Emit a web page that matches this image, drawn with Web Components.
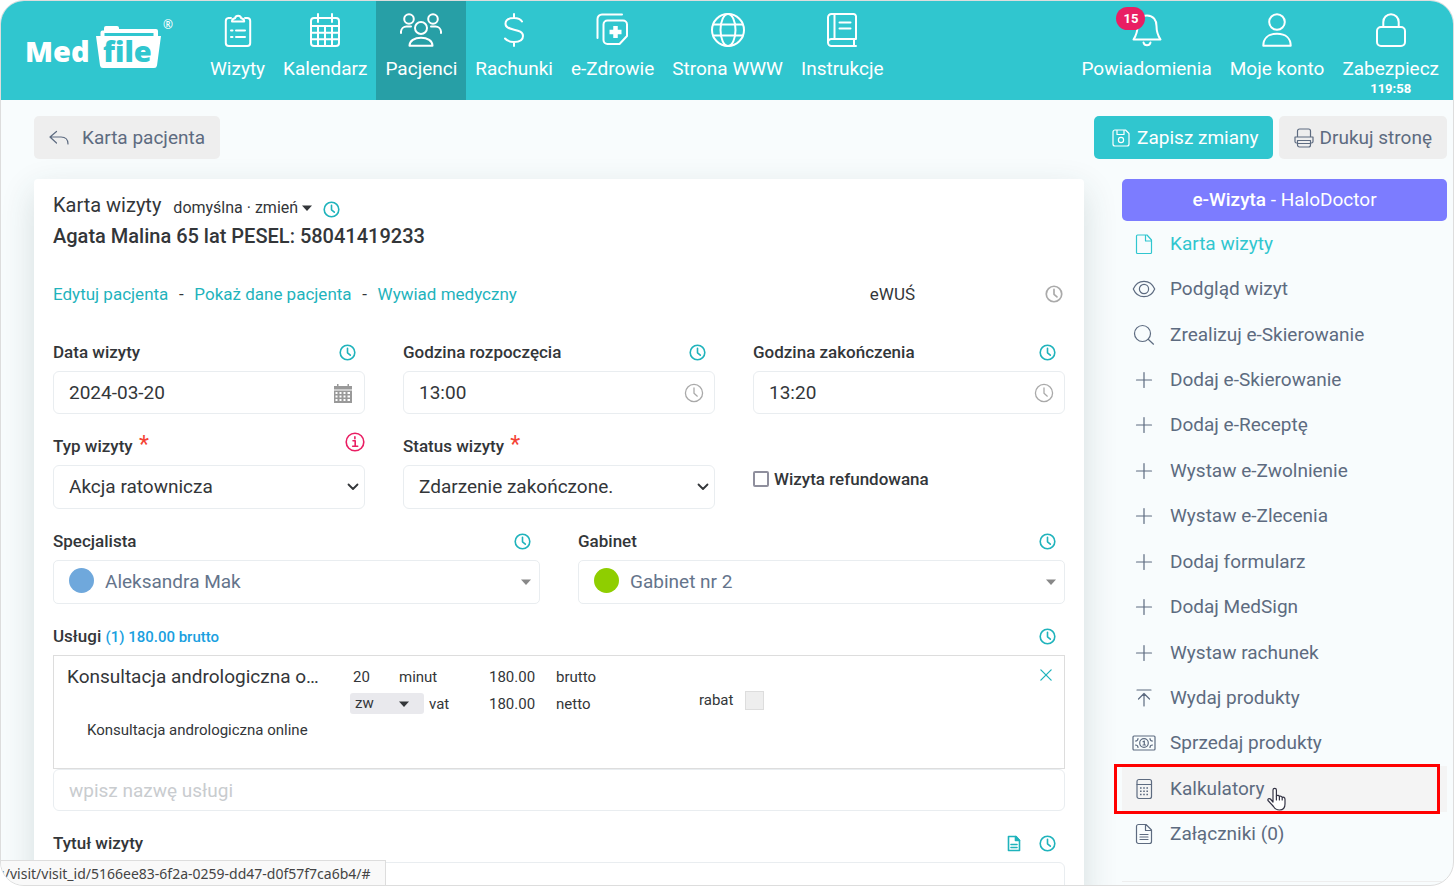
<!DOCTYPE html>
<html lang="pl">
<head>
<meta charset="utf-8">
<meta name="viewport" content="width=device-width, initial-scale=1">
<title>MedFile – Karta wizyty</title>
<style>
  html, body { margin: 0; height: 100%; background: #fff; }
  body {
    --teal: #30c6cf;
    --teal-dark: #279fa6;
    --link: #1fb3bc;
    --ink: #333639;
    --muted: #64748b;
    --line: #e9edf0;
    color: var(--ink);
    font: 400 19px/24px Roboto, "Noto Sans", sans-serif;
  }
</style>
</head>
<body>
<mf-app></mf-app>

<script>
/* Icon registry: [viewBox, markup]; strokes take the current colour. */
const CLOCK = '<circle cx="8.5" cy="8.5" r="7.3"/><path d="M8.5 4.2v4.6l2.8 2.4"/>';
const PLUS = '<path d="M12 4.5v15M4.500 12h15"/>';
const ICONS = {
  clipboard: ['0 0 34 34', '<path d="M10 5H7.5A3 3 0 0 0 4.800 8v22a3 3 0 0 0 3 3h18.400a3 3 0 0 0 3-3V8a3 3 0 0 0-3-3H24"/><path d="M11 8.500a3.300 3.300 0 0 1 3-3.300 3.200 3.200 0 0 1 6.200 0 3.300 3.300 0 0 1 3 3.300z"/><path d="M15 17.500h9M15 24h9M10 17.500h1.500M10 24h1.500"/>'],
  calendar: ['0 0 34 34', '<rect x="3" y="5" width="28" height="28" rx="3"/><path d="M3 13h28M3 19.700h28M3 26.300h28M10 13v20M17 13v20M24 13v20M10 1v8M24 1v8"/>'],
  people: ['0 0 42 34', '<circle cx="9" cy="6" r="4.800"/><circle cx="33" cy="6" r="4.800"/><circle cx="21" cy="15" r="6"/><path d="M1 20v-1.500a5.500 5.500 0 0 1 5.500-5h4.500M41 20v-1.500a5.500 5.500 0 0 0-5.500-5H31M9.500 32.800c0-5 5-8 11.500-8s11.500 3 11.500 8z"/>'],
  dollar: ['0 0 34 34', '<path d="M17 1v4M17 29v4M25 8.500C23.500 6 21 5 17 5c-5 0-8.500 2-8.500 5.800C8.500 19 26 14.500 26 23c0 4-3.700 6-9 6-4.500 0-7-1.200-9-3.500"/>'],
  records: ['0 0 34 34', '<path d="M1.500 25V6A4.500 4.500 0 0 1 6 1.500h20"/><path d="M11.500 7.500H27a4 4 0 0 1 4 4V23l-7.500 8h-12a4 4 0 0 1-4-4V11.500a4 4 0 0 1 4-4z"/><path d="M19.500 13v12M13.500 19h12" stroke-width="4.500" stroke-linecap="butt"/>'],
  globe: ['0 0 34 34', '<circle cx="17" cy="17" r="16"/><ellipse cx="17" cy="17" rx="7.500" ry="16"/><path d="M2.500 11.500h29M2.500 22.500h29"/>'],
  book: ['0 0 34 34', '<path d="M31 26V3.500A2.500 2.500 0 0 0 28.500 1H6.500A3.500 3.500 0 0 0 3 4.500v25A3.500 3.500 0 0 0 6.500 33H31M31 26H6.500A3.500 3.500 0 0 0 3 29.500M29 26v7M9.500 1v25M14.500 9.500h11M14.500 15.500h11"/>'],
  bell: ['0 0 34 34', '<path d="M17 2.500c6.500 0 9.500 5 9.500 10.500 0 7 2 10.500 4 13.500H3.500c2-3 4-6.500 4-13.500C7.500 7.500 10.500 2.500 17 2.500zM13.500 29.500a3.600 3.600 0 0 0 7 0"/>'],
  user: ['0 0 34 34', '<circle cx="17" cy="9" r="7.800"/><path d="M3.300 32.800c0-7 4.500-12 13.700-12s13.700 5 13.700 12z"/>'],
  lock: ['0 0 34 34', '<rect x="3" y="14" width="28" height="19" rx="4"/><path d="M9.300 14V9a7.700 7.700 0 0 1 15.400 0v5"/>'],
  back: ['0 0 20 20', '<path d="M7.500 3.500 1 9l6.500 6M1 9h11c4.500 0 7 2.500 7 7"/>'],
  save: ['0 0 20 20', '<path d="M14.500 2H4a2 2 0 0 0-2 2v12a2 2 0 0 0 2 2h12a2 2 0 0 0 2-2V5.500zM6 2v4.500h7V2"/><circle cx="10" cy="12" r="2.600"/>'],
  print: ['0 0 20 20', '<path d="M3.500 9V3a2 2 0 0 1 2-2h9a2 2 0 0 1 2 2v6M3.500 15H2.500A1.500 1.500 0 0 1 1 13.500V9h18v4.500a1.500 1.500 0 0 1-1.500 1.500h-1M3.500 12.500h13V17a2 2 0 0 1-2 2h-9a2 2 0 0 1-2-2zM3.500 15.500h13"/>'],
  clock: ['0 0 17 17', CLOCK],
  info: ['0 0 20 20', '<circle cx="10" cy="10" r="8.800"/><path d="M8 8.800h2.200V14M7.700 14.300h5M9.900 4.800v2"/>'],
  datepicker: ['0 0 18 20', '<path fill="currentColor" stroke="none" d="M0 3h3V1h1.500v2h9V1H15v2h3v3.500H0z"/><path fill="currentColor" stroke="none" fill-rule="evenodd" d="M0 7.500h18V20H0zM1.500 9v2h2V9zm4 0v2h2V9zm4 0v2h2V9zm4 0v2h2.500V9zm-12 3.500v2h2v-2zm4 0v2h2v-2zm4 0v2h2v-2zm4 0v2h2.500v-2zm-12 3.500v2h2v-2zm4 0v2h2v-2zm4 0v2h2v-2zm4 0v2h2.500v-2z"/>'],
  chevron: ['0 0 12 12', '<path d="m1.500 3.500 4.500 4.500 4.500-4.500"/>'],
  caret: ['0 0 12 12', '<path fill="currentColor" stroke="none" d="M1 3.500h10L6 9z"/>'],
  note: ['0 0 14 17', '<path d="M1.500 1.500H9l3.500 4v10h-11zM4 9.500h6M4 12.500h6"/><path fill="currentColor" d="M8.500 1.500v4h4z"/>'],
  close: ['0 0 14 14', '<path d="m1 1 12 12M13 1 1 13"/>'],
  file: ['0 0 24 24', '<path d="M5.500 3H15l4.500 5v12.500a1 1 0 0 1-1 1h-13a1 1 0 0 1-1-1V4a1 1 0 0 1 1-1zM13.500 3v6h6"/>'],
  eye: ['0 0 24 24', '<path d="M1.300 12C3 8 7 4.300 12 4.300S21 8 22.700 12C21 16 17 19.700 12 19.700S3 16 1.300 12z"/><circle cx="12" cy="12" r="4.600"/>'],
  search: ['0 0 24 24', '<circle cx="10.500" cy="10.500" r="8"/><path d="m16.200 16.200 5.300 5"/>'],
  plus: ['0 0 24 24', PLUS],
  upload: ['0 0 24 24', '<path d="M5 4h14M12 20V7.500M6.500 13 12 7.500l5.500 5.500"/>'],
  money: ['0 0 24 24', '<rect x="1" y="5" width="22" height="14" rx="1"/><path d="M3.500 10a2.500 2.500 0 0 0 2.500-2.500M20.500 10A2.500 2.500 0 0 1 18 7.500M3.500 14a2.500 2.500 0 0 1 2.500 2.500M20.500 14a2.500 2.500 0 0 0-2.500 2.500M11 10.700l1.300-.7v4M11 14h2.500"/><circle cx="12" cy="12" r="4.300"/>'],
  calculator: ['0 0 24 24', '<rect x="5" y="2.500" width="14.500" height="19" rx="2"/><path d="M5 7.500h14.500"/><path stroke-linecap="butt" stroke-width="1.500" stroke-dasharray="1.600 1.600" d="M8 11h9M8 14.300h9M8 17.600h9"/>'],
  attachment: ['0 0 24 24', '<path d="M6.500 2.500H14l5.500 5.500v11.500a2 2 0 0 1-2 2h-11a2 2 0 0 1-2-2v-15a2 2 0 0 1 2-2zM13.500 2.500v6h6M8 12.500h8M8 15h8M8 17.500h8"/>']
};

/* Registers an element whose shadow tree is built from its attributes. */
function define(name, render) {
  customElements.define(name, class extends HTMLElement {
    constructor() { super(); this.attachShadow({ mode: 'open' }); }
    connectedCallback() {
      if (this.shadowRoot.childNodes.length) return;
      const template = document.createElement('template');
      template.innerHTML = render(key => this.getAttribute(key) ?? '');
      this.shadowRoot.append(template.content.cloneNode(true));
    }
  });
}

define('mf-icon', a => {
  const [box, body] = ICONS[a('name')];
  return `<style>
    :host { display: block; flex: none; width: var(--w, 24px); height: var(--h, 24px); }
    svg { display: block; width: 100%; height: 100%; overflow: visible; fill: none; stroke: currentColor;
      stroke-width: var(--stroke, 1); stroke-linecap: round; stroke-linejoin: round; }
  </style><svg viewBox="${box}" aria-hidden="true">${body}</svg>`;
});

define('mf-logo', () => `<style>
    :host { display: block; }
    a { display: block; }
    svg { display: block; width: 150px; height: 54px; overflow: visible; font-family: "Open Sans", sans-serif; }
    .word { font-size: 29px; font-weight: 800; }
    .mark { font-size: 12px; font-weight: 600; }
  </style>
  <a href="#" aria-label="MedFile"><svg viewBox="0 0 150 54">
    <path d="M74.500 21v-6.500a2 2 0 0 1 2-2H78V10a2 2 0 0 1 2-2h11a2 2 0 0 1 2 2v1h37a2 2 0 0 1 2 2v8z" fill="#fff"/>
    <path d="M78.500 15h49v3h-49z" fill="#30c6cf"/>
    <path d="M70 18h65l-4 29.500a3 3 0 0 1-3 2.500H77a3 3 0 0 1-3-2.500z" fill="#fff"/>
    <text class="word" x="-1" y="44" fill="#fff">Med</text>
    <text class="word" x="77" y="44" fill="#30c6cf">file</text>
    <text class="mark" x="137" y="11" fill="#fff">®</text>
  </svg></a>`);

define('mf-nav-item', a => `<style>
    :host { display: block; }
    a { display: flex; flex-direction: column; align-items: center; gap: 10px; box-sizing: border-box; height: 100%;
      padding: 12px 9px 0; color: #fff; text-decoration: none; position: relative; white-space: nowrap; }
    :host([active]) a { background: var(--teal-dark); }
    mf-icon { --w: ${a('icon') === 'people' ? 42 : 34}px; --h: 34px; --stroke: 2; }
    small { font-size: 13px; line-height: 16px; font-weight: 700; margin-top: -10px; }
    .badge { position: absolute; top: 6px; left: 44px; min-width: 29px; box-sizing: border-box; padding: 0 4px;
      border-radius: 12px; background: #e91e63; font-size: 13px; line-height: 23px; font-weight: 700; text-align: center; }
  </style>
  <a href="#"><mf-icon name="${a('icon')}"></mf-icon><span><slot></slot></span>
  ${a('note') ? `<small>${a('note')}</small>` : ''}${a('badge') ? `<span class="badge">${a('badge')}</span>` : ''}</a>`);

define('mf-topbar', () => `<style>
    :host { display: flex; background: var(--teal); height: 99px; flex: none; padding: 0 5px 0 25px; box-sizing: border-box; }
    mf-logo { padding-top: 17px; width: 175px; flex: none; }
    nav { display: flex; }
    .end { margin-left: auto; }
  </style>
  <mf-logo></mf-logo>
  <nav aria-label="Główne">
    <mf-nav-item icon="clipboard">Wizyty</mf-nav-item>
    <mf-nav-item icon="calendar">Kalendarz</mf-nav-item>
    <mf-nav-item icon="people" active>Pacjenci</mf-nav-item>
    <mf-nav-item icon="dollar">Rachunki</mf-nav-item>
    <mf-nav-item icon="records">e-Zdrowie</mf-nav-item>
    <mf-nav-item icon="globe">Strona WWW</mf-nav-item>
    <mf-nav-item icon="book">Instrukcje</mf-nav-item>
  </nav>
  <nav class="end" aria-label="Konto">
    <mf-nav-item icon="bell" badge="15">Powiadomienia</mf-nav-item>
    <mf-nav-item icon="user">Moje konto</mf-nav-item>
    <mf-nav-item icon="lock" note="119:58">Zabezpiecz</mf-nav-item>
  </nav>`);

define('mf-button', a => `<style>
    :host { display: block; }
    button { display: flex; align-items: center; justify-content: center; gap: var(--gap, 6px); width: 100%; height: var(--height, 43px);
      padding: 0 15px; border: 0; border-radius: 5px; background: #eee; color: #5d6b80; font: inherit; cursor: pointer; }
    :host([primary]) button { background: var(--teal); color: #fff; padding: 0 14px 0 17px; }
    :host([violet]) button { background: #7c7cff; color: #fff; }
    mf-icon { --w: 20px; --h: 20px; --stroke: 1.2; }
  </style>
  <button type="button">${a('icon') ? `<mf-icon name="${a('icon')}"></mf-icon>` : ''}<span><slot></slot></span></button>`);

define('mf-toolbar', () => `<style>
    :host { display: flex; gap: 6px; padding: 16px 6px 0 33px; }
    .back { --gap: 13px; margin-right: auto; }
  </style>
  <mf-button class="back" icon="back">Karta pacjenta</mf-button>
  <mf-button primary icon="save">Zapisz zmiany</mf-button>
  <mf-button icon="print">Drukuj stronę</mf-button>`);

/* Small button that opens the change history of a value. */
define('mf-history', a => `<style>
    :host { display: block; }
    button { display: block; padding: 0; border: 0; background: none; color: var(--tone, var(--link)); cursor: pointer; }
    mf-icon { --w: var(--size, 17px); --h: var(--size, 17px); --stroke: 1.6; }
    :host([icon="note"]) mf-icon { --w: 14px; }
  </style>
  <button type="button" aria-label="${a('label') || 'Historia zmian'}"><mf-icon name="${a('icon') || 'clock'}"></mf-icon></button>`);

/* Shared by the form controls: a label row above a bordered box. */
const labelStyle = `
  :host { display: block; min-width: 0; }
  .top { display: flex; align-items: center; height: 24px; margin-bottom: 7px; padding-right: 9px; }
  :host([info]) .top { padding-right: 0; }
  label { font-size: 17px; font-weight: 500; margin-right: auto; }
  b { color: #f44336; font-size: 23px; font-weight: 400; margin-left: 2px; line-height: 20px; }
  .info { --tone: #e91e63; --size: 20px; margin-bottom: 8px; }
  .box { display: grid; align-items: center; }
  .box > * { grid-area: 1 / 1; }
  input, select { appearance: none; box-sizing: border-box; width: 100%; margin: 0; border: 1px solid var(--line);
    border-radius: 6px; background: #fff; color: inherit; font: inherit; padding: 0 15px; outline: 0; }
  input { height: 42px; }
  select { height: 44px; }
  input::placeholder { color: #c9cccf; opacity: 1; }
  .mark { justify-self: end; pointer-events: none; }`;
const tools = a => a('info') ? '<mf-history class="info" icon="info" label="Informacja"></mf-history>'
  : a('plain') ? '' : '<mf-history></mf-history>';

define('mf-field', a => `<style>${labelStyle}
    input { height: 43px; }
    .mark { margin-right: 11px; color: #a9a9a9; --w: 20px; --h: 20px; --stroke: 1.1; }
    .date { --w: 18px; margin-right: 13px; color: #999; }
  </style>
  <div class="top"><label for="control">${a('label')}</label><mf-history></mf-history></div>
  <div class="box"><input id="control" type="text" value="${a('value')}">
  <mf-icon class="mark ${a('icon') === 'datepicker' ? 'date' : ''}" name="${a('icon')}"></mf-icon></div>`);

define('mf-select', a => `<style>${labelStyle}
    .mark { margin-right: 6px; --w: 12px; --h: 12px; --stroke: 1.8; }
    .caret { margin-right: 8px; color: #888; }
    :host([dot]) select { padding-left: 51px; color: var(--muted); border-radius: 5px; }
    .dot { width: 25px; height: 25px; border-radius: 50%; margin-left: 16px; margin-bottom: 3px; background: ${a('dot')}; pointer-events: none; }
  </style>
  <div class="top"><label for="control">${a('label')}${a('required') ? ' <b>*</b>' : ''}</label>${tools(a)}</div>
  <div class="box"><select id="control"><option>${a('value')}</option></select>
  ${a('dot') ? '<span class="dot"></span><mf-icon class="mark caret" name="caret"></mf-icon>' : '<mf-icon class="mark" name="chevron"></mf-icon>'}</div>`);

define('mf-services', () => `<style>${labelStyle}
    small { font-size: 15px; color: #1a9fe0; }
    .list { border: 1px solid #ddd; box-sizing: border-box; min-height: 114px; padding: 7px 12px 0 13px; display: grid;
      grid-template-columns: 283px 49px 90px 67px 134px auto 1fr auto; grid-template-rows: 27px 27px 26px; align-items: center; font-size: 15px; }
    .name { font-size: 19px; white-space: nowrap; }
    .qty { padding-left: 3px; }
    .vat { display: grid; grid-column: 2 / 4; grid-template-columns: 74px auto; gap: 5px; align-items: center; }
    .pick { display: grid; align-items: center; }
    .pick > * { grid-area: 1 / 1; }
    .pick select { height: 21px; border: 0; border-radius: 3px; background: #e9e9ed; font-size: 15px; line-height: 19px; padding: 0 5px; }
    .pick .mark { --w: 12px; --h: 12px; margin-right: 14px; }
    .rabat { grid-column: 6; grid-row: 2; display: flex; align-items: center; gap: 12px; font-size: 15px; font-weight: 400; margin: 0 0 7px 9px; }
    .rabat input { width: 19px; height: 19px; border: 1px solid #ddd; border-radius: 0; background: #eee; padding: 0; }
    .full { grid-column: 1 / 3; grid-row: 3; padding-left: 20px; }
    .close { grid-column: 8; grid-row: 1; padding: 0; border: 0; background: none; color: var(--link); cursor: pointer; margin-bottom: 3px; }
    .close mf-icon { --w: 12px; --h: 12px; --stroke: 1.5; }
  </style>
  <div class="top"><label for="control">Usługi <small>(1) 180.00 brutto</small></label><mf-history></mf-history></div>
  <div class="list">
    <span class="name">Konsultacja andrologiczna o…</span>
    <span class="qty">20</span><span>minut</span><span>180.00</span><span>brutto</span>
    <button class="close" type="button" aria-label="Usuń usługę"><mf-icon name="close"></mf-icon></button>
    <span class="vat"><span class="pick"><select aria-label="Stawka VAT"><option>zw</option></select><mf-icon class="mark" name="caret"></mf-icon></span>vat</span>
    <span>180.00</span><span>netto</span>
    <label class="rabat">rabat <input type="checkbox" disabled></label>
    <span class="full">Konsultacja andrologiczna online</span>
  </div>
  <input id="control" type="text" placeholder="wpisz nazwę usługi">`);

define('mf-title-field', () => `<style>${labelStyle}
    mf-history + mf-history { margin-left: 18px; }
  </style>
  <div class="top"><label for="control">Tytuł wizyty</label><mf-history icon="note" label="Szablony"></mf-history><mf-history></mf-history></div>
  <input id="control" type="text">`);

define('mf-check', () => `<style>
    :host { display: block; }
    label { display: flex; align-items: center; gap: 5px; font-size: 17px; font-weight: 500; }
    input { appearance: none; box-sizing: border-box; width: 16px; height: 16px; margin: 0; border: 2px solid #8f8f9d; border-radius: 2px; background: #fff; }
    input:checked { background: var(--teal); }
  </style><label><input type="checkbox"><slot></slot></label>`);

define('mf-visit-card', () => `<style>
    :host { display: block; background: #fff; border-radius: 4px; padding: 12px 19px 0; box-shadow: 0 12px 34px rgba(40, 70, 70, .16); }
    h1, h2 { margin: 0; font-size: 20px; }
    h1 { font-weight: 400; line-height: 28px; }
    h2 { font-weight: 500; line-height: 30px; margin-top: 2px; }
    .head { display: flex; align-items: center; }
    .layout { display: flex; align-items: center; gap: 3px; margin: 6px 10px 0 12px; padding: 0; border: 0; background: none;
      color: inherit; font: 400 16px/22px Roboto, sans-serif; cursor: pointer; }
    .layout mf-icon { --w: 12px; --h: 12px; }
    .head mf-history { margin-top: 9px; }
    .links { display: flex; align-items: center; margin: 31px 0 34px; font-size: 17px; padding-right: 2px; }
    .links a { color: var(--link); text-decoration: none; }
    .links i { font-style: normal; width: 26px; text-align: center; }
    .ewus { margin-left: auto; margin-right: 130px; }
    .links mf-history { --tone: #aaa; --size: 18px; }
    form { display: grid; grid-template-columns: repeat(6, 1fr); column-gap: 38px; row-gap: 20px; }
    form > * { grid-column: span 2; }
    .half { grid-column: span 3; }
    .full { grid-column: 1 / -1; }
    mf-check { align-self: end; margin-bottom: 18px; }
  </style>
  <div class="head"><h1>Karta wizyty</h1>
    <button class="layout" type="button">domyślna · zmień <mf-icon name="caret"></mf-icon></button><mf-history></mf-history></div>
  <h2>Agata Malina 65 lat PESEL: 58041419233</h2>
  <div class="links"><a href="#">Edytuj pacjenta</a><i>-</i><a href="#">Pokaż dane pacjenta</a><i>-</i><a href="#">Wywiad medyczny</a>
    <span class="ewus">eWUŚ</span><mf-history></mf-history></div>
  <form>
    <mf-field label="Data wizyty" value="2024-03-20" icon="datepicker"></mf-field>
    <mf-field label="Godzina rozpoczęcia" value="13:00" icon="clock"></mf-field>
    <mf-field label="Godzina zakończenia" value="13:20" icon="clock"></mf-field>
    <mf-select label="Typ wizyty" value="Akcja ratownicza" required="1" info="1"></mf-select>
    <mf-select label="Status wizyty" value="Zdarzenie zakończone." required="1" plain="1"></mf-select>
    <mf-check>Wizyta refundowana</mf-check>
    <mf-select class="half" label="Specjalista" value="Aleksandra Mak" dot="#6fa8dc"></mf-select>
    <mf-select class="half" label="Gabinet" value="Gabinet nr 2" dot="#8fce00"></mf-select>
    <mf-services class="full"></mf-services>
    <mf-title-field class="full"></mf-title-field>
  </form>`);

define('mf-menu-item', a => `<style>
    :host { display: block; position: relative; }
    a { display: flex; align-items: center; gap: 14px; height: 100%; padding-left: 10px; color: #5d6b80; text-decoration: none; }
    :host([active]) a { color: var(--teal); }
    :host([hover]) a { background: #f4f4f4; }
    mf-icon { --stroke: 1.2; }
    :host([hover])::after { content: ""; position: absolute; inset: -2px 7px -2px -8px; border: 3px solid #f00; }
    .hand { display: none; position: absolute; left: 145px; top: 21px; width: 20px; height: 24px; overflow: visible; z-index: 1; }
    :host([hover]) .hand { display: block; }
  </style>
  <a href="#"><mf-icon name="${a('icon')}"></mf-icon><span><slot></slot></span></a>
  <svg class="hand" viewBox="0 0 20 24" fill="#fff" stroke="#334" stroke-width="1.2" stroke-linejoin="round" stroke-linecap="round" aria-hidden="true">
    <path d="M6 15V3a1.700 1.700 0 0 1 3.400 0v6c.8-1 2.800-.8 3 .6.800-.8 2.500-.5 2.800.8 1-.6 2.800 0 2.800 1.800V17c0 4-2 6-5.500 6-3 0-4.500-1-6-3.500L1 13.500c-.6-1.500 1.200-2.500 2.400-1.500z"/>
    <path d="M9.400 9v4M12.400 9.800V13M15.200 10.600V13" fill="none"/></svg>`);

define('mf-sidebar', () => `<style>
    :host { display: block; }
    mf-button { --height: 42px; }
    strong { font-weight: 500; }
    nav { display: grid; grid-auto-rows: 1fr; min-height: 636px; padding-bottom: 24px; border-bottom: 1px solid #eee; }
  </style>
  <mf-button violet><strong>e-Wizyta</strong> - HaloDoctor</mf-button>
  <nav aria-label="Wizyta">
    <mf-menu-item icon="file" active>Karta wizyty</mf-menu-item>
    <mf-menu-item icon="eye">Podgląd wizyt</mf-menu-item>
    <mf-menu-item icon="search">Zrealizuj e-Skierowanie</mf-menu-item>
    <mf-menu-item icon="plus">Dodaj e-Skierowanie</mf-menu-item>
    <mf-menu-item icon="plus">Dodaj e-Receptę</mf-menu-item>
    <mf-menu-item icon="plus">Wystaw e-Zwolnienie</mf-menu-item>
    <mf-menu-item icon="plus">Wystaw e-Zlecenia</mf-menu-item>
    <mf-menu-item icon="plus">Dodaj formularz</mf-menu-item>
    <mf-menu-item icon="plus">Dodaj MedSign</mf-menu-item>
    <mf-menu-item icon="plus">Wystaw rachunek</mf-menu-item>
    <mf-menu-item icon="upload">Wydaj produkty</mf-menu-item>
    <mf-menu-item icon="money">Sprzedaj produkty</mf-menu-item>
    <mf-menu-item icon="calculator" hover>Kalkulatory</mf-menu-item>
    <mf-menu-item icon="attachment">Załączniki (0)</mf-menu-item>
  </nav>`);

define('mf-app', () => `<style>
    :host { display: flex; flex-direction: column; box-sizing: border-box; height: 100vh; position: relative; overflow: hidden;
      border: 1px solid #ddd; border-radius: 24px; background: #f8fcfd; }
    main { display: grid; grid-template-columns: minmax(0, 1fr) 325px; gap: 38px; padding: 20px 6px 0 33px; flex: 1; min-height: 0; }
    .status { position: absolute; left: 0; bottom: 0; box-sizing: border-box; height: 25px; padding: 0 14px 0 0; border: solid #ddd; border-width: 1px 1px 0 0;
      background: #f9f9f9; color: #444; font: 14px/26px "Noto Sans", sans-serif; }
  </style>
  <mf-topbar></mf-topbar>
  <mf-toolbar></mf-toolbar>
  <main><mf-visit-card></mf-visit-card><mf-sidebar></mf-sidebar></main>
  <div class="status">:/visit/visit_id/5166ee83-6f2a-0259-dd47-d0f57f7ca6b4/#</div>`);
</script>
</body>
</html>
